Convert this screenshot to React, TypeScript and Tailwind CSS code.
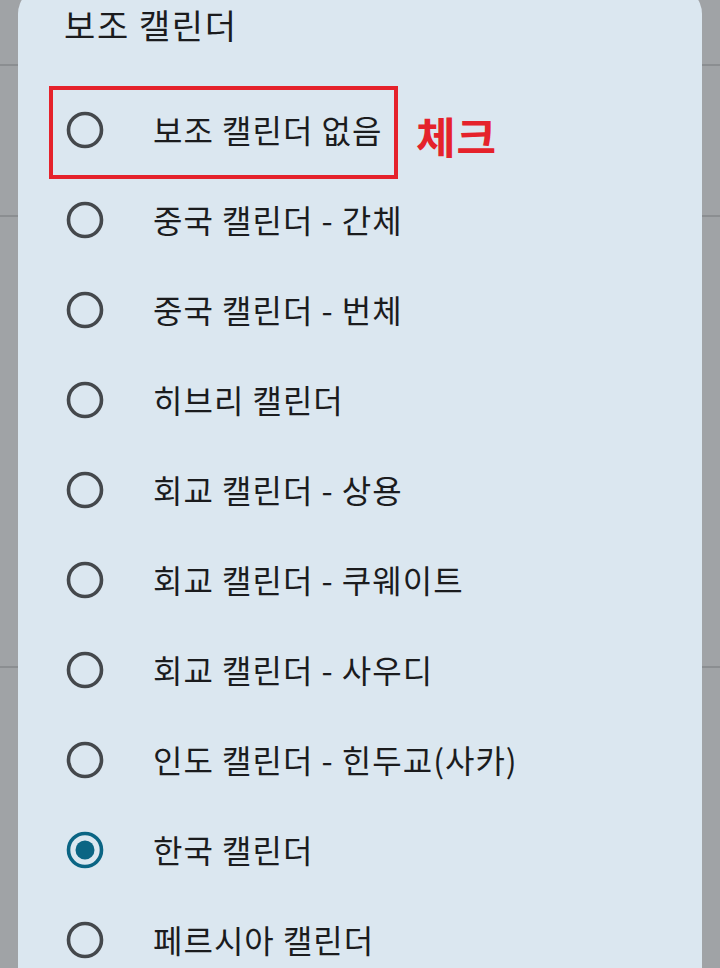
import React from "react";

const options = [
  "보조 캘린더 없음",
  "중국 캘린더 - 간체",
  "중국 캘린더 - 번체",
  "히브리 캘린더",
  "회교 캘린더 - 상용",
  "회교 캘린더 - 쿠웨이트",
  "회교 캘린더 - 사우디",
  "인도 캘린더 - 힌두교(사카)",
  "한국 캘린더",
  "페르시아 캘린더",
];

const selected = 8;

function Radio({ checked }: { checked: boolean }) {
  return (
    <svg width="38" height="38" viewBox="0 0 38 38" className="shrink-0">
      <circle
        cx="19"
        cy="19"
        r="16.5"
        fill="none"
        stroke={checked ? "#0b6584" : "#44484c"}
        strokeWidth="3.6"
      />
      {checked && <circle cx="19" cy="19" r="9.5" fill="#0b6584" />}
    </svg>
  );
}

export default function App() {
  return (
    <div
      className="relative h-[968px] w-[720px] overflow-hidden bg-[#a0a3a6]"
      style={{ fontFamily: '"Noto Sans CJK KR", "Noto Sans", sans-serif' }}
    >
      {/* underlying list dividers */}
      <div className="flex flex-col">
        <div className="h-[66px] border-b-2 border-[#8b8e91]" />
        <div className="h-[151px] border-b-2 border-[#8b8e91]" />
        <div className="h-[451px] border-b-2 border-[#8b8e91]" />
      </div>

      {/* dialog */}
      <div className="absolute left-[18px] top-[-14px] h-[1100px] w-[684px] rounded-[28px] bg-[#dbe7f0]">
        <div className="pl-[46px] pt-[19px] text-[34px] leading-[40px] tracking-[1.6px] text-[#1b1c1e]">
          보조 캘린더
        </div>
        <div className="mt-[40px] flex flex-col">
          {options.map((label, i) => (
            <div key={i} className="relative flex h-[90px] items-center">
              <div className="ml-[48px] flex w-[38px] justify-center">
                <Radio checked={i === selected} />
              </div>
              <span className="mb-[3px] ml-[49px] text-[32px] leading-none tracking-[1px] text-[#1b1c1e]">
                {label}
              </span>
              {i === 0 && (
                <>
                  <div className="absolute left-[31px] top-[1px] h-[93px] w-[349px] border-4 border-[#e5222b]" />
                  <span className="absolute left-[398px] top-[29px] text-[43px] font-bold leading-none tracking-[1px] text-[#e5222b]">
                    체크
                  </span>
                </>
              )}
            </div>
          ))}
        </div>
      </div>
    </div>
  );
}
